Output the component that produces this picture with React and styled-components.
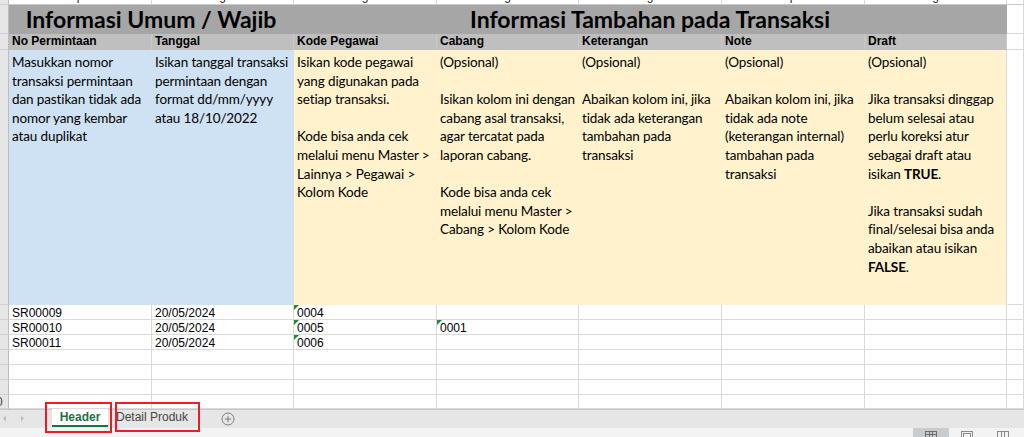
import React from 'react';
import styled, { createGlobalStyle } from 'styled-components';

const COLS = '9px 143px 142px 143px 142px 143px 143px 142px 1fr';
const GRID = '#dadada';
const BLUE = '#cfe2f3';
const YELLOW = '#fff2cc';

const Global = createGlobalStyle`
  html, body { margin: 0; padding: 0; background: #fff; }
  body { width: 1024px; height: 437px; overflow: hidden; font-family: "Liberation Sans", Arial, sans-serif; }
  * { box-sizing: border-box; }
`;

const Screen = styled.div`
  width: 1024px;
  height: 437px;
  display: flex;
  flex-direction: column;
  overflow: hidden;
  background: #fff;
`;

const Sheet = styled.div`
  height: 409px;
  flex: none;
  display: flex;
  flex-direction: column;
  overflow: hidden;
`;

const Row = styled.div`
  display: grid;
  grid-template-columns: ${COLS};
  height: ${p => p.$h}px;
  flex: none;
`;

const RowHead = styled.div`
  background: #e6e6e6;
  border-right: 1px solid #bdbdbd;
  border-bottom: 1px solid #d0d0d0;
  overflow: hidden;
  display: flex;
  align-items: center;
  font-size: 12px;
  color: #444;
  span { flex: none; width: 26px; margin-left: -17px; text-align: center; }
`;

const Cell = styled.div`
  grid-column: span ${p => p.$span || 1};
  background: ${p => p.$bg || '#fff'};
  border-right: 1px solid ${p => p.$vline || GRID};
  border-bottom: 1px solid ${p => p.$hline || GRID};
  overflow: hidden;
  white-space: nowrap;
  position: relative;
  min-width: 0;
`;

const TopCell = styled(Cell)`
  text-align: center;
  font-size: 12px;
  line-height: 12px;
  color: #222;
  span { display: inline-block; transform: translateY(-10px); }
`;

const TitleCell = styled(Cell)`
  background: #a6a6a6;
  border-right-color: #a6a6a6;
  border-bottom-color: #a6a6a6;
  display: flex;
  align-items: center;
  justify-content: center;
  font-family: Lato, "Open Sans", sans-serif;
  font-weight: 700;
  font-size: 23px;
  color: #000;
  padding-bottom: 1px;
`;

const HeadCell = styled(Cell)`
  background: #bfbfbf;
  border-right-color: #c9c9c9;
  border-bottom-color: #bfbfbf;
  font-weight: 700;
  font-size: 12px;
  line-height: 15px;
  padding-left: 3px;
  color: #000;
`;

const NoteCell = styled(Cell)`
  font-family: Lato, "Open Sans", sans-serif;
  font-size: 13.5px;
  letter-spacing: -0.12px;
  line-height: 18.6px;
  padding: 3px 0 0 3px;
  color: #000;
  b { font-weight: 700; }
`;

const DataCell = styled(Cell)`
  font-size: 12px;
  line-height: 14px;
  padding: 1px 0 0 3px;
  color: #000;
  &::before {
    content: '';
    display: ${p => (p.$flag ? 'block' : 'none')};
    position: absolute;
    left: 0;
    top: 0;
    border-top: 5px solid #1f8a3b;
    border-right: 5px solid transparent;
  }
`;

const TabBar = styled.div`
  height: 19px;
  flex: none;
  background: #e6e6e6;
  border-top: 1px solid #c6c6c6;
  display: flex;
  align-items: stretch;
  position: relative;
  z-index: 2;
`;

const NavArea = styled.div`
  width: 52px;
  flex: none;
  display: flex;
  align-items: center;
  gap: 13px;
  padding-left: 2px;
  padding-bottom: 2px;
`;

const SheetTab = styled.div`
  flex: none;
  display: flex;
  align-items: center;
  justify-content: center;
  font-size: 12px;
  height: 18px;
  margin-top: -1px;
  padding-bottom: 2px;
  width: ${p => p.$w}px;
  margin-left: ${p => p.$ml || 0}px;
  background: ${p => (p.$active ? '#fff' : 'transparent')};
  color: ${p => (p.$active ? '#1e7145' : '#444')};
  font-weight: ${p => (p.$active ? 700 : 400)};
  box-shadow: ${p => (p.$active ? 'inset 0 -2px 0 #1e7145' : 'none')};
`;

const AddButton = styled.div`
  flex: none;
  margin-left: 27px;
  display: flex;
  align-items: center;
  padding-bottom: 1px;
`;

const Annotation = styled.div`
  position: absolute;
  left: ${p => p.$x}px;
  top: -8px;
  width: ${p => p.$w}px;
  height: ${p => p.$h}px;
  border: 2px solid #ec1c24;
  pointer-events: none;
`;

const StatusBar = styled.div`
  height: 9px;
  flex: none;
  background: #f3f3f3;
  display: flex;
  justify-content: flex-end;
  padding-right: 3px;
  overflow: hidden;
`;

const ViewButton = styled.div`
  width: ${p => p.$w}px;
  height: 9px;
  flex: none;
  display: flex;
  justify-content: center;
  padding-top: 3px;
  background: ${p => (p.$active ? '#c9cccf' : 'transparent')};
`;

const notes = [
  {
    bg: BLUE,
    lines: ['Masukkan nomor', 'transaksi permintaan', 'dan pastikan tidak ada', 'nomor yang kembar', 'atau duplikat'],
  },
  {
    bg: BLUE,
    lines: ['Isikan tanggal transaksi', 'permintaan dengan', 'format dd/mm/yyyy', 'atau 18/10/2022'],
  },
  {
    bg: YELLOW,
    lines: ['Isikan kode pegawai', 'yang digunakan pada', 'setiap transaksi.', '', 'Kode bisa anda cek', 'melalui menu Master >', 'Lainnya > Pegawai >', 'Kolom Kode'],
  },
  {
    bg: YELLOW,
    lines: ['(Opsional)', '', 'Isikan kolom ini dengan', 'cabang asal transaksi,', 'agar tercatat pada', 'laporan cabang.', '', 'Kode bisa anda cek', 'melalui menu Master >', 'Cabang > Kolom Kode'],
  },
  {
    bg: YELLOW,
    lines: ['(Opsional)', '', 'Abaikan kolom ini, jika', 'tidak ada keterangan', 'tambahan pada', 'transaksi'],
  },
  {
    bg: YELLOW,
    lines: ['(Opsional)', '', 'Abaikan kolom ini, jika', 'tidak ada note', '(keterangan internal)', 'tambahan pada', 'transaksi'],
  },
  {
    bg: YELLOW,
    last: true,
    lines: ['(Opsional)', '', 'Jika transaksi dinggap', 'belum selesai atau', 'perlu koreksi atur', 'sebagai draft atau', 'isikan *TRUE*.', '', 'Jika transaksi sudah', 'final/selesai bisa anda', 'abaikan atau isikan', '*FALSE*.'],
  },
];

const headers = ['No Permintaan', 'Tanggal', 'Kode Pegawai', 'Cabang', 'Keterangan', 'Note', 'Draft'];

const topGlyphs = ['p', 'g', 'g', 'g', 'g', 'p', 'g', ''];

const dataRows = [
  { n: 4, cells: ['SR00009', '20/05/2024', '0004', '', '', '', ''] },
  { n: 5, cells: ['SR00010', '20/05/2024', '0005', '0001', '', '', ''] },
  { n: 6, cells: ['SR00011', '20/05/2024', '0006', '', '', '', ''] },
  { n: 7, cells: ['', '', '', '', '', '', ''] },
  { n: 8, cells: ['', '', '', '', '', '', ''] },
  { n: 9, cells: ['', '', '', '', '', '', ''] },
  { n: 10, cells: ['', '', '', '', '', '', ''], h: 14 },
];

function renderLine(line, i) {
  const parts = line.split('*');
  return (
    <div key={i}>
      {line === '' ? '\u00a0' : parts.map((p, j) => (j % 2 ? <b key={j}>{p}</b> : <span key={j}>{p}</span>))}
    </div>
  );
}

const Arrow = ({ dir }) => (
  <svg width="5" height="7" viewBox="0 0 5 7">
    <path d={dir === 'left' ? 'M4 0.5 L1 3.5 L4 6.5 Z' : 'M1 0.5 L4 3.5 L1 6.5 Z'} fill="#bdbdbd" />
  </svg>
);

const PlusCircle = () => (
  <svg width="14" height="14" viewBox="0 0 14 14">
    <circle cx="7" cy="7" r="6" fill="none" stroke="#7d7d7d" strokeWidth="1" />
    <path d="M7 3.8 V10.2 M3.8 7 H10.2" stroke="#7d7d7d" strokeWidth="1" />
  </svg>
);

const NormalIcon = () => (
  <svg width="12" height="10" viewBox="0 0 12 10">
    <rect x="0.5" y="0.5" width="11" height="9" fill="none" stroke="#6e6e6e" />
    <path d="M0.5 3.5 H11.5 M0.5 6.5 H11.5 M4.5 0.5 V9.5 M7.5 0.5 V9.5" stroke="#6e6e6e" />
  </svg>
);

const LayoutIcon = () => (
  <svg width="12" height="10" viewBox="0 0 12 10">
    <rect x="0.5" y="0.5" width="11" height="9" fill="none" stroke="#8a8a8a" />
    <rect x="2.5" y="2.5" width="7" height="7" fill="none" stroke="#8a8a8a" />
  </svg>
);

const BreakIcon = () => (
  <svg width="12" height="10" viewBox="0 0 12 10">
    <rect x="0.5" y="0.5" width="11" height="9" fill="none" stroke="#8a8a8a" />
    <path d="M4.5 0.5 V9.5 M7.5 0.5 V9.5" stroke="#8a8a8a" />
  </svg>
);

export default function App() {
  return (
    <Screen>
      <Global />
      <Sheet>
        <Row $h={5}>
          <RowHead />
          {topGlyphs.map((g, i) => (
            <TopCell key={i} $hline="#c8c8c8">
              <span>{g}</span>
            </TopCell>
          ))}
        </Row>
        <Row $h={29}>
          <RowHead>
            <span>1</span>
          </RowHead>
          <TitleCell $span={2}>Informasi Umum / Wajib</TitleCell>
          <TitleCell $span={5} $vline={GRID}>Informasi Tambahan pada Transaksi</TitleCell>
          <Cell />
        </Row>
        <Row $h={16}>
          <RowHead>
            <span>2</span>
          </RowHead>
          {headers.map((h, i) => (
            <HeadCell key={h} $vline={i === headers.length - 1 ? GRID : undefined}>
              {h}
            </HeadCell>
          ))}
          <Cell />
        </Row>
        <Row $h={255}>
          <RowHead>
            <span>3</span>
          </RowHead>
          {notes.map((n, i) => (
            <NoteCell key={i} $bg={n.bg} $vline={n.last ? GRID : n.bg} $hline={n.bg}>
              {n.lines.map(renderLine)}
            </NoteCell>
          ))}
          <Cell />
        </Row>
        {dataRows.map(r => (
          <Row key={r.n} $h={r.h || 15}>
            <RowHead>
              <span>{r.n}</span>
            </RowHead>
            {r.cells.map((c, i) => (
              <DataCell key={i} $flag={/^0\d+$/.test(c)}>
                {c}
              </DataCell>
            ))}
            <Cell />
          </Row>
        ))}
      </Sheet>
      <TabBar>
        <NavArea>
          <Arrow dir="left" />
          <Arrow dir="right" />
        </NavArea>
        <SheetTab $active $w={56}>Header</SheetTab>
        <SheetTab $w={84} $ml={2}>Detail Produk</SheetTab>
        <AddButton>
          <PlusCircle />
        </AddButton>
        <Annotation $x={45} $w={67} $h={31} />
        <Annotation $x={115} $w={85} $h={30} />
      </TabBar>
      <StatusBar>
        <ViewButton $active $w={36}>
          <NormalIcon />
        </ViewButton>
        <ViewButton $w={36}>
          <LayoutIcon />
        </ViewButton>
        <ViewButton $w={36}>
          <BreakIcon />
        </ViewButton>
      </StatusBar>
    </Screen>
  );
}
